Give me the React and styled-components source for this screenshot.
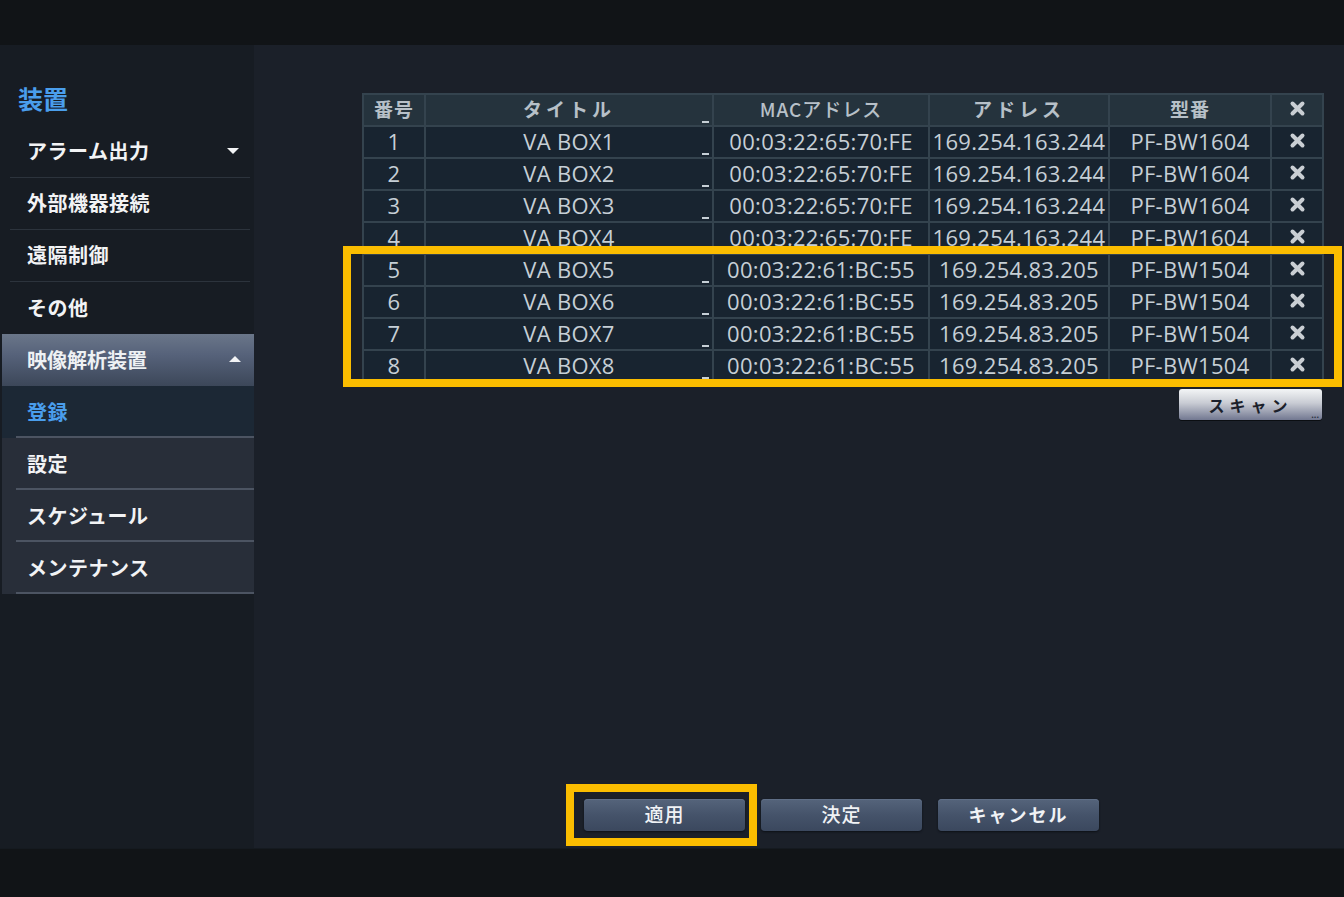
import React from 'react'
import styled, { createGlobalStyle } from 'styled-components'

const GlobalStyle = createGlobalStyle`
    html, body {
        margin: 0;
        padding: 0;
        background: #111417;
    }
    body {
        font-family: "Noto Sans CJK JP", "Open Sans", sans-serif;
    }
`

const rows = [
    { no: 1, title: 'VA BOX1', mac: '00:03:22:65:70:FE', addr: '169.254.163.244', model: 'PF-BW1604' },
    { no: 2, title: 'VA BOX2', mac: '00:03:22:65:70:FE', addr: '169.254.163.244', model: 'PF-BW1604' },
    { no: 3, title: 'VA BOX3', mac: '00:03:22:65:70:FE', addr: '169.254.163.244', model: 'PF-BW1604' },
    { no: 4, title: 'VA BOX4', mac: '00:03:22:65:70:FE', addr: '169.254.163.244', model: 'PF-BW1604' },
    { no: 5, title: 'VA BOX5', mac: '00:03:22:61:BC:55', addr: '169.254.83.205', model: 'PF-BW1504' },
    { no: 6, title: 'VA BOX6', mac: '00:03:22:61:BC:55', addr: '169.254.83.205', model: 'PF-BW1504' },
    { no: 7, title: 'VA BOX7', mac: '00:03:22:61:BC:55', addr: '169.254.83.205', model: 'PF-BW1504' },
    { no: 8, title: 'VA BOX8', mac: '00:03:22:61:BC:55', addr: '169.254.83.205', model: 'PF-BW1504' },
]

const menu = ['アラーム出力', '外部機器接続', '遠隔制御', 'その他']
const subMenu = ['登録', '設定', 'スケジュール', 'メンテナンス']

function CloseIcon() {
    return (
        <svg width="17" height="17" viewBox="0 0 17 17">
            <path d="M3.5 3.5 L13.5 13.5 M13.5 3.5 L3.5 13.5" stroke="#c9ced3" strokeWidth="4" strokeLinecap="round" />
        </svg>
    )
}

function App() {
    return (
        <Page>
            <GlobalStyle />
            <TopBar />
            <Main>
                <Sidebar>
                    <SideTitle>装置</SideTitle>
                    <MenuList>
                        {menu.map((m, i) => (
                            <MenuItem key={m}>
                                <span>{m}</span>
                                {i === 0 && <Triangle $dir="down" />}
                            </MenuItem>
                        ))}
                    </MenuList>
                    <GroupHeader>
                        <span>映像解析装置</span>
                        <Triangle $dir="up" />
                    </GroupHeader>
                    {subMenu.map((s, i) => (
                        <SubItem key={s} $active={i === 0}>{s}</SubItem>
                    ))}
                </Sidebar>

                <Content>
                    <TableWrap>
                        <Grid>
                            <HeadCell>番号</HeadCell>
                            <HeadCell $mark $spaced>タイトル</HeadCell>
                            <HeadCell $light>MACアドレス</HeadCell>
                            <HeadCell $spaced>アドレス</HeadCell>
                            <HeadCell>型番</HeadCell>
                            <HeadCell><CloseIcon /></HeadCell>
                            {rows.map(r => (
                                <React.Fragment key={r.no}>
                                    <Cell>{r.no}</Cell>
                                    <Cell $mark>{r.title}</Cell>
                                    <Cell>{r.mac}</Cell>
                                    <Cell>{r.addr}</Cell>
                                    <Cell>{r.model}</Cell>
                                    <Cell><CloseIcon /></Cell>
                                </React.Fragment>
                            ))}
                        </Grid>
                        <Highlight $top={153} $left={-19} $width={999} $height={141} />
                    </TableWrap>

                    <ScanRow>
                        <ScanButton>スキャン</ScanButton>
                    </ScanRow>

                    <ButtonRow>
                        <ActionButton>
                            適用
                            <Highlight $top={-15} $left={-18} $width={191} $height={62} />
                        </ActionButton>
                        <ActionButton>決定</ActionButton>
                        <ActionButton $spaced>キャンセル</ActionButton>
                    </ButtonRow>
                </Content>
            </Main>
            <BottomBar />
        </Page>
    )
}

const Page = styled.div`
    width: 1344px;
    height: 897px;
    display: flex;
    flex-direction: column;
    background: #111417;
    overflow: hidden;
`

const TopBar = styled.div`
    height: 45px;
    flex-shrink: 0;
    background: #111417;
`

const BottomBar = styled.div`
    flex: 1;
    background: #111417;
    border-top: 1px solid #151a20;
`

const Main = styled.div`
    height: 803px;
    display: flex;
`

const Sidebar = styled.div`
    width: 254px;
    flex-shrink: 0;
    background: #171c23;
    display: flex;
    flex-direction: column;
`

const SideTitle = styled.div`
    height: 81px;
    box-sizing: border-box;
    padding: 38px 0 0 18px;
    font-size: 25px;
    line-height: 30px;
    font-weight: 700;
    color: #4a9eec;
`

const MenuList = styled.div`
    margin: 0 4px 0 10px;
    display: flex;
    flex-direction: column;
`

const MenuItem = styled.div`
    height: 52px;
    box-sizing: border-box;
    padding: 0 9px 2px 17px;
    display: flex;
    align-items: center;
    justify-content: space-between;
    font-size: 20px;
    font-weight: 700;
    color: #f2f3f5;
    letter-spacing: 0.5px;
    border-bottom: 1px solid #2c333c;
    &:last-child {
        border-bottom: none;
    }
`

const Triangle = styled.span`
    width: 0;
    height: 0;
    border-left: 6px solid transparent;
    border-right: 6px solid transparent;
    ${p => p.$dir === 'down'
        ? 'border-top: 6px solid #f2f3f5;'
        : 'border-bottom: 6px solid #f2f3f5;'}
    margin-right: 2px;
`

const GroupHeader = styled.div`
    height: 52px;
    margin-left: 2px;
    box-sizing: border-box;
    padding: 0 11px 2px 25px;
    display: flex;
    align-items: center;
    justify-content: space-between;
    font-size: 20px;
    font-weight: 700;
    color: #eef1f4;
    background: linear-gradient(to bottom, #6a7689 0%, #56627a 40%, #3c4759 100%);
`

const SubItem = styled.div`
    height: 52px;
    margin-left: 2px;
    box-sizing: border-box;
    padding: 0 0 2px 25px;
    display: flex;
    align-items: center;
    font-size: 20px;
    font-weight: 700;
    letter-spacing: 0.5px;
    color: ${p => (p.$active ? '#4a9eec' : '#f2f3f5')};
    background: ${p => (p.$active ? '#1c2835' : '#282e39')};
    position: relative;
    &::after {
        content: '';
        position: absolute;
        left: 14px;
        right: 0;
        bottom: 0;
        height: 2px;
        background: #4c5462;
    }
`

const Content = styled.div`
    flex: 1;
    background: #1b2029;
    display: flex;
    flex-direction: column;
    padding: 48px 0 0 108px;
    box-sizing: border-box;
`

const TableWrap = styled.div`
    position: relative;
    width: 962px;
`

const Grid = styled.div`
    display: grid;
    grid-template-columns: 60px 286px 214px 178px 160px 50px;
    grid-auto-rows: 30px;
    gap: 2px;
    padding: 2px;
    background: #34434e;
    font-family: "Open Sans", "Noto Sans CJK JP", sans-serif;
`

const Cell = styled.div`
    position: relative;
    display: flex;
    align-items: center;
    justify-content: center;
    padding-bottom: 3px;
    box-sizing: border-box;
    background: #182430;
    color: #c6cfd6;
    font-size: 22px;
    letter-spacing: 0.3px;
    white-space: nowrap;
    ${p => p.$mark && `
        &::after {
            content: '';
            position: absolute;
            right: 3px;
            bottom: 2px;
            width: 7px;
            height: 2px;
            background: #c6cfd6;
        }
    `}
`

const HeadCell = styled(Cell)`
    padding-bottom: 4px;
    background: #25333d;
    color: #b7c0c8;
    font-size: 19px;
    font-weight: ${p => (p.$light ? 500 : 700)};
    font-family: "Noto Sans CJK JP", "Open Sans", sans-serif;
    letter-spacing: ${p => (p.$spaced ? '4px' : '1px')};
`

const Highlight = styled.span`
    position: absolute;
    top: ${p => p.$top}px;
    left: ${p => p.$left}px;
    width: ${p => p.$width}px;
    height: ${p => p.$height}px;
    box-sizing: border-box;
    border: 8px solid #fbbd00;
    pointer-events: none;
`

const ScanRow = styled.div`
    width: 962px;
    display: flex;
    justify-content: flex-end;
    padding: 6px 2px 0 0;
    box-sizing: border-box;
`

const ScanButton = styled.div`
    width: 143px;
    height: 31px;
    border-radius: 3px;
    display: flex;
    align-items: center;
    justify-content: center;
    font-size: 16px;
    font-weight: 700;
    letter-spacing: 5px;
    color: #1b1f2b;
    background: linear-gradient(to bottom, #f3f5f6 0%, #c9ccd4 45%, #727891 100%);
    box-shadow: 0 1px 0 #0b0e12;
    position: relative;
    &::after {
        content: '...';
        position: absolute;
        right: 3px;
        bottom: 1px;
        font-size: 8px;
        letter-spacing: 0;
        line-height: 8px;
        color: #2a2f3d;
    }
`

const ButtonRow = styled.div`
    margin-top: auto;
    margin-bottom: 17px;
    margin-left: 222px;
    display: flex;
    gap: 16px;
`

const ActionButton = styled.div`
    position: relative;
    width: 161px;
    height: 32px;
    box-sizing: border-box;
    padding-bottom: 3px;
    border-radius: 4px;
    display: flex;
    align-items: center;
    justify-content: center;
    font-size: ${p => (p.$spaced ? '18px' : '19px')};
    font-weight: ${p => (p.$spaced ? 700 : 500)};
    letter-spacing: ${p => (p.$spaced ? '2px' : '1px')};
    color: #f0f2f5;
    background: linear-gradient(to bottom, #55647b 0%, #45536a 50%, #3b485e 100%);
    box-shadow: 0 1px 2px #0d1116, inset 0 1px 0 #5f6e86;
`

export default App
